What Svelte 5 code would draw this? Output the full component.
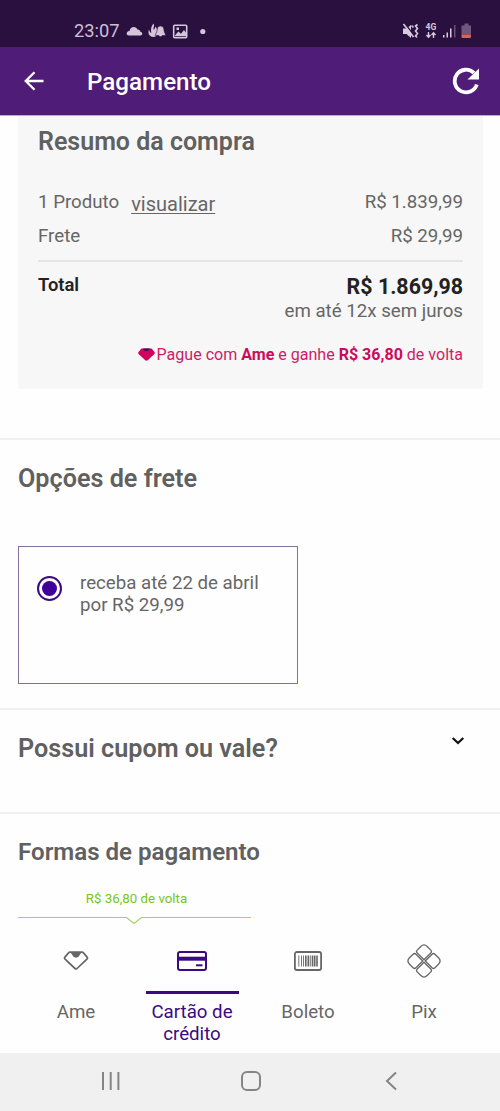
<script lang="ts">
  interface Method {
    id: string;
    label: string;
  }

  const methods: Method[] = [
    { id: "ame", label: "Ame" },
    { id: "card", label: "Cartão de crédito" },
    { id: "boleto", label: "Boleto" },
    { id: "pix", label: "Pix" },
  ];

  let selected = $state("card");
</script>

<div class="screen">
  <div class="status">
    <span class="clock">23:07</span>
    <svg class="notifications" width="86" height="20" viewBox="0 0 86 20" fill="#d3c5da">
      <path d="M3 14.500c-3.300 0-3-4.300.6-4.800C4.500 5.500 9.500 4.800 11.500 8.500c2 0 2.600 1 2.800 2.300 2.700.4 2.500 3.700 0 3.700Z" />
      <path d="M27.500 2.500c1.500 2.500-1 4.500.5 6.500.5-1.500 1.200-2 1.500-3.500 3.500 4.500 2.500 10.500-2 10.500-4.500 0-6-4-4.500-7.500.5 2 1 3 2.300 3.500-.8-4 0-7 2.200-9.500Z" />
      <path d="M34.500 5c2.600 0 3.600 2 3.600 5l1.700 4.500h-3.500a2 2 0 0 1-3.600 0h-3.500L31 10c0-3 .9-5 3.500-5Z" stroke="#2a103f" stroke-width=".6" />
      <rect x="47.700" y="4.200" width="13" height="12.500" rx="1" fill="none" stroke="#d3c5da" stroke-width="1.600" />
      <path d="m49 14.500 3.300-4 2.700 2.300 3-3.800 2 2.500v3.800H49ZM50.500 6.500H53V9h-2.500Z" />
      <circle cx="76.800" cy="10.500" r="2.600" />
    </svg>
    <svg class="system" width="72" height="20" viewBox="0 0 72 20" fill="#d8cbdd">
      <path d="M1 7.500h3.500L9 4v13l-4.500-4H1Z" />
      <path d="m2 1.500 10.500 13.500" stroke="#2a103f" stroke-width="1.500" />
      <path d="m1.500 3 10 13M9.500 4.500l2 2M15.500 3.500l-2 1.500 2 2.500-2 2.500 2 2.500-2 2.500 1.500 1.500" fill="none" stroke="#d8cbdd" stroke-width="1.600" />
      <text x="23.500" y="9" font-size="8.500" font-weight="700">4G</text>
      <path d="M26.500 11v5m-2-2 2 2.300 2-2.300M31.500 17v-5m-2 2 2-2.300 2 2.300" fill="none" stroke="#d8cbdd" stroke-width="1.400" />
      <path d="M41 14h1.500v2.500H41ZM44.500 11.500H46v5h-1.500ZM48 7.500h1.500v9H48Z" />
      <path d="M52 4h1.500v12.500H52Z" fill="#67517a" />
      <path d="M62.500 2.500h4v2h2.500v9h-9.500v-9h3Z" fill="#6f5880" />
      <path d="M59.500 13.500H69V16a1 1 0 0 1-1 1h-7.500a1 1 0 0 1-1-1Z" fill="#d36658" />
    </svg>
  </div>

  <header>
    <svg width="20" height="20" viewBox="0 0 20 20" fill="none" stroke="#fff" stroke-width="2.300">
      <path d="M19.500 10H2M10.500 1.200 1.700 10l8.800 8.800" />
    </svg>
    <h1>Pagamento</h1>
    <svg width="28" height="28" viewBox="0 0 28 28">
      <path d="M24.800 17.500A11.300 11.300 0 1 1 22 6" fill="none" stroke="#fff" stroke-width="3.800" />
      <path d="M27 1.500V12.500H15.500Z" fill="#fff" />
    </svg>
  </header>

  <section class="summary">
    <h2>Resumo da compra</h2>
    <div class="row">
      <span class="product">1 Produto <a href="#produtos">visualizar</a></span>
      <span>R$ 1.839,99</span>
    </div>
    <div class="row">
      <span>Frete</span>
      <span>R$ 29,99</span>
    </div>
    <div class="total">
      <strong class="total-label">Total</strong>
      <div class="total-value">
        <strong>R$ 1.869,98</strong>
        <span>em até 12x sem juros</span>
      </div>
    </div>
    <p class="cashback">
      <svg width="17" height="13" viewBox="0 0 17 13">
        <path d="M3.500.5h10l3 3.500c.5.800.2 1.500-.4 2.200L10 12c-1 .9-2 .9-3 0L.9 6.200C.3 5.500 0 4.800.5 4Z" fill="#d0005c" />
        <path d="M5 .5h7L10.500 2.500q-2 1-4 0Z" fill="#2c1763" />
      </svg>
      <span>Pague com <b>Ame</b> e ganhe <b>R$ 36,80</b> de volta</span>
    </p>
  </section>

  <section class="shipping">
    <h2>Opções de frete</h2>
    <label class="option">
      <span class="radio"></span>
      <span>receba até 22 de abril<br />por R$ 29,99</span>
    </label>
  </section>

  <section class="coupon">
    <h2>Possui cupom ou vale?</h2>
    <svg width="14" height="10" viewBox="0 0 14 10" fill="none" stroke="#111" stroke-width="2.200">
      <path d="m1.700 2 5.300 5 5.300-5" />
    </svg>
  </section>

  <section class="payment">
    <h2>Formas de pagamento</h2>
    <div class="hint">
      <span>R$ 36,80 de volta</span>
      <svg width="233" height="9" viewBox="0 0 233 9" fill="none" stroke="#a0d468" stroke-width="1.200">
        <path d="M0 1.500h108.500l7.500 6 7.500-6H233" />
      </svg>
    </div>
    <div class="methods">
      {#each methods as method}
        <button class:active={selected === method.id} onclick={() => (selected = method.id)}>
          <span class="icon">
            {#if method.id === "ame"}
              <svg width="26" height="20" viewBox="0 0 26 20" fill="none" stroke="currentColor" stroke-width="1.700">
                <path d="M7 1.200h12q1 0 1.700.9l3.400 4q.8 1.100-.2 2.100L14 17.500q-1 .9-2 0L2.100 8.200q-1-1-.2-2.100l3.400-4Q6 1.200 7 1.200Z" />
                <path d="M7.500 1.500h11l-2.700 3.800Q13 8 10.200 5.300Z" fill="currentColor" stroke="none" />
              </svg>
            {:else if method.id === "card"}
              <svg width="30" height="20" viewBox="0 0 30 20" fill="none" stroke="currentColor" stroke-width="2">
                <rect x="1" y="1" width="28" height="18" rx="2" />
                <path d="M1 7.700h28" stroke-width="4" />
                <path d="M19 14.300h6.500" />
              </svg>
            {:else if method.id === "boleto"}
              <svg width="28" height="20" viewBox="0 0 28 20" fill="none" stroke="currentColor">
                <rect x=".9" y="1" width="26.200" height="18" rx="2" stroke-width="1.800" />
                <path d="M4.800 4.500v11M7.500 4.500v11M9.500 4.500v11M16.300 4.500v11" stroke-width=".9" />
                <path d="M11.800 4.500v11M14.300 4.500v11M18.500 4.500v11M20.700 4.500v11M23 4.500v11" stroke-width="1.600" />
              </svg>
            {:else}
              <svg width="36" height="36" viewBox="-18 -18 36 36" fill="none" stroke="currentColor" stroke-width="1.300">
                {#each [45, 135, 225, 315] as angle}
                  <path
                    transform="rotate({angle})"
                    d="M-.9-.9h-9.600q-2 0-2-2v-5.100q0-4.500 4.500-4.500h5.100q2 0 2 2Z"
                  />
                {/each}
              </svg>
            {/if}
          </span>
          <span class="label">{method.label}</span>
        </button>
      {/each}
    </div>
  </section>

  <nav>
    <svg width="20" height="20" viewBox="0 0 20 20" fill="none" stroke="#858585" stroke-width="2">
      <path d="M2 1v18M9.700 1v18M17.400 1v18" />
    </svg>
    <svg width="20" height="20" viewBox="0 0 20 20" fill="none" stroke="#858585" stroke-width="2">
      <rect x="1" y="1" width="18" height="18" rx="5" />
    </svg>
    <svg width="20" height="20" viewBox="0 0 20 20" fill="none" stroke="#858585" stroke-width="2">
      <path d="m15 1.500-9 8.500 9 8.500" />
    </svg>
  </nav>
</div>

<style>
  :global(body) {
    margin: 0;
    background: #fefefe;
  }

  .screen {
    display: flex;
    flex-direction: column;
    box-sizing: border-box;
    width: 500px;
    height: 1111px;
    overflow: hidden;
    background: #fefefe;
    color: #666;
    font-family: Roboto, sans-serif;
    font-size: 18.700px;
    line-height: 22px;
  }

  svg {
    display: block;
    flex: none;
  }

  .status {
    display: flex;
    align-items: center;
    box-sizing: border-box;
    height: 47px;
    padding: 15px 26px 0 74px;
    background: #2a103f;
    color: #cdbfd5;
  }

  .clock {
    width: 52px;
    font-size: 18.300px;
  }

  .system {
    margin-left: auto;
  }

  header {
    display: flex;
    align-items: center;
    box-sizing: border-box;
    height: 69px;
    padding: 0 20px 0 24px;
    background: #4f1c78;
    border-bottom: 1px solid #c5a5d6;
    color: #fff;
  }

  h1 {
    flex: 1;
    margin: 1px 0 0 43px;
    font-size: 24.200px;
    font-weight: 500;
    line-height: 30px;
  }

  h2 {
    margin: 0;
    color: #606060;
    font-size: 25.200px;
    font-weight: 600;
    line-height: 30px;
  }

  .summary {
    box-sizing: border-box;
    height: 273px;
    margin: 0 17px 49px 18px;
    padding: 11px 20px 0;
    border-radius: 0 0 3px 3px;
    background: #f7f7f7;
  }

  .summary h2 {
    margin-bottom: 34px;
    font-size: 25px;
  }

  .row {
    display: flex;
    justify-content: space-between;
    height: 34px;
  }

  .product {
    display: flex;
    gap: 12px;
  }

  .product a {
    padding-top: 2px;
    color: inherit;
    font-size: 20px;
    text-decoration-thickness: 1px;
    text-underline-offset: 2px;
  }

  .total {
    display: flex;
    justify-content: space-between;
    margin-top: 1px;
    padding-top: 13px;
    border-top: 2px solid #e4e4e4;
    color: #222;
  }

  .total-label {
    margin-top: -1px;
    font-size: 18.400px;
    font-weight: 600;
  }

  .total-value {
    display: flex;
    flex-direction: column;
    align-items: flex-end;
    line-height: 24px;
  }

  .total-value strong {
    font-size: 21.400px;
  }

  .total-value span {
    color: #666;
  }

  .cashback {
    display: flex;
    align-items: center;
    justify-content: flex-end;
    gap: 2px;
    margin: 21px 0 0;
    color: #cf1b68;
    font-size: 16.050px;
    line-height: 21px;
  }

  .cashback b {
    color: #cc0a5c;
  }

  .shipping {
    box-sizing: border-box;
    height: 270px;
    padding: 24px 18px 0;
    border-top: 2px solid #f0f0f0;
  }

  .option {
    display: flex;
    gap: 18px;
    box-sizing: border-box;
    width: 280px;
    height: 138px;
    margin-top: 52px;
    padding: 25px 18px;
    border: 1px solid #84719b;
  }

  .radio {
    flex: none;
    box-sizing: border-box;
    width: 25px;
    height: 25px;
    margin-top: 4px;
    border: 2.500px solid #3b0a80;
    border-radius: 50%;
    padding: 3px;
    background: #410099 content-box;
  }

  .coupon {
    display: flex;
    justify-content: space-between;
    box-sizing: border-box;
    height: 104px;
    padding: 24px 35px 0 18px;
    border-top: 2px solid #f0f0f0;
  }

  .coupon svg {
    margin-top: 2px;
  }

  .payment {
    flex: 1;
    padding: 23px 18px 0;
    border-top: 2px solid #f0f0f0;
  }

  .payment h2 {
    font-size: 24.100px;
  }

  .hint {
    width: 233px;
    margin-top: 23px;
    color: #76c522;
    font-size: 13.300px;
    line-height: 18px;
    text-align: center;
  }

  .hint span {
    display: block;
    padding-left: 4px;
  }

  .hint svg {
    margin-top: 8px;
  }

  .methods {
    display: grid;
    grid-template-columns: repeat(4, 116px);
    margin-top: 18px;
  }

  button {
    display: flex;
    flex-direction: column;
    align-items: center;
    padding: 0;
    border: none;
    background: none;
    color: #666;
    font: inherit;
    cursor: pointer;
  }

  .icon {
    display: flex;
    align-items: center;
    justify-content: center;
    box-sizing: border-box;
    width: 93px;
    height: 51px;
    padding-bottom: 12px;
    border-bottom: 3px solid transparent;
  }

  .label {
    width: 93px;
    margin-top: 7px;
  }

  .active {
    color: #3b0a80;
  }

  .active .icon {
    border-bottom-color: #3b0a80;
  }

  nav {
    display: flex;
    justify-content: space-between;
    box-sizing: border-box;
    height: 58px;
    padding: 18px 99px 0 101px;
    background: #f0f0f0;
  }
</style>
